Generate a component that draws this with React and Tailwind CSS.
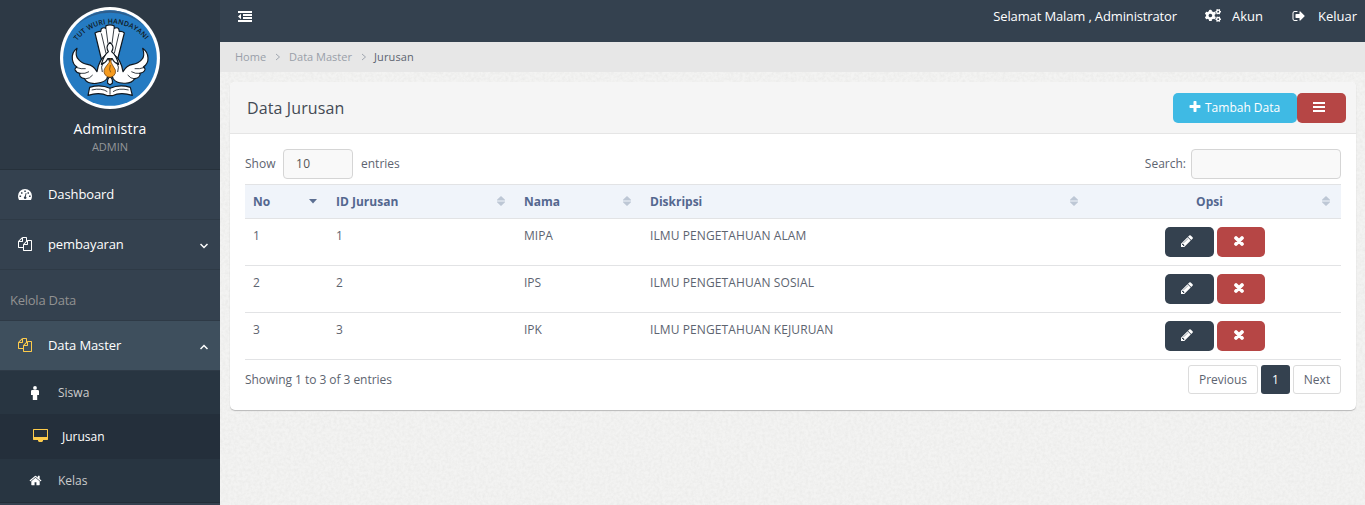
import React from "react";
import { FaCogs } from "react-icons/fa";

const paths = {
  files:
    "M1696 384q40 0 68 28t28 68v1216q0 40-28 68t-68 28h-960q-40 0-68-28t-28-68v-288h-544q-40 0-68-28t-28-68v-672q0-40 20-88t48-76l408-408q28-28 76-48t88-20h416q40 0 68 28t28 68v328q68-40 128-40h416zm-544 213l-299 299h299v-299zm-640-384l-299 299h299v-299zm196 647l316-316v-416h-384v416q0 40-28 68t-68 28h-416v640h512v-256q0-40 20-88t48-76zm956 804v-1152h-384v416q0 40-28 68t-68 28h-416v640h896z",
  plus:
    "M1600 736v192q0 40-28 68t-68 28h-416v416q0 40-28 68t-68 28h-192q-40 0-68-28t-28-68v-416h-416q-40 0-68-28t-28-68v-192q0-40 28-68t68-28h416v-416q0-40 28-68t68-28h192q40 0 68 28t28 68v416h416q40 0 68 28t28 68z",
  pencil:
    "M491 1536l91-91-235-235-91 91v107h128v128h107zm523-928q0-22-22-22-10 0-17 7l-542 542q-7 7-7 17 0 22 22 22 10 0 17-7l542-542q7-7 7-17zm-54-192l416 416-832 832h-416v-416zm683 96q0 53-37 90l-166 166-416-416 166-165q36-38 90-38 53 0 91 38l235 234q37 39 37 91z",
  home:
    "M1472 992v480q0 26-19 45t-45 19h-384v-384h-256v384h-384q-26 0-45-19t-19-45v-480q0-1 .5-3t.5-3l575-474 575 474q1 2 1 6zm223-69l-62 74q-8 9-21 11h-3q-13 0-21-7l-692-577-692 577q-12 8-24 7-13-2-21-11l-62-74q-8-10-7-23.5t11-21.5l719-599q32-26 76-26t76 26l244 204v-195q0-14 9-23t23-9h192q14 0 23 9t9 23v408l219 182q10 8 11 21.5t-7 23.5z",
  signOut:
    "M704 1440q0 4 1 20t.5 26.5-3 23.5-10 19.5-20.5 6.5h-320q-119 0-203.5-84.5t-84.5-203.5v-704q0-119 84.5-203.5t203.5-84.5h320q13 0 22.5 9.5t9.5 22.5q0 4 1 20t.5 26.5-3 23.5-10 19.5-20.5 6.5h-320q-66 0-113 47t-47 113v704q0 66 47 113t113 47h312l11.5 1 11.5 3 8 5.5 7 9 2 13.5zm928-544q0 26-19 45l-544 544q-19 19-45 19t-45-19-19-45v-288h-448q-26 0-45-19t-19-45v-384q0-26 19-45t45-19h448v-288q0-26 19-45t45-19 45 19l544 544q19 19 19 45z",
};

function Glyph({ name, className }) {
  return (
    <svg viewBox="0 0 1792 1792" fill="currentColor" className={className}>
      <path d={paths[name]} />
    </svg>
  );
}

function Cross() {
  return (
    <svg viewBox="0 0 10 10" className="h-[10px] w-[10px]" fill="none" stroke="currentColor" strokeWidth="3.700" strokeLinecap="round">
      <path d="M2 2l6 6M8 2L2 8" />
    </svg>
  );
}

function Emblem() {
  return (
    <svg viewBox="60 20 300 306" className="h-[102px] w-[100px]">
      <ellipse cx="210" cy="173" rx="150" ry="153" fill="#fff" />
      <ellipse cx="210" cy="173" rx="140.500" ry="143.500" fill="#257bc2" />
      <path d="M106 77Q154 30 210 30t104 47Q268 37 210 37T106 77z" fill="#2d5f8f" />
      <path id="motto-arc" d="M111 122A129.500 129.500 0 0 1 320 124" fill="none" />
      <text fontFamily="Open Sans, sans-serif" fontSize="21" fontWeight="600" fill="#101820">
        <textPath href="#motto-arc" textLength="236" lengthAdjust="spacing">TUT WURI HANDAYANI</textPath>
      </text>
      <g fill="#fff" stroke="#10171e" strokeWidth="3.500" strokeLinejoin="round">
        <path d="M184 176L165 98q11-7 17-4l2-9q8-5 13-1l1-8q12-5 24 0l1 8q8-4 13 1l2 9q8-3 15 4l-20 78z" />
        <path d="M111 144q-16 12-14 32 2 17 14 24-7 4-6 8 4 9 15 11-3 6 1 10 5 5 13 6 4 10 18 13 12 3 22 0 18-2 26-12l10-25 10 25q10 12 26 12 28 4 38-13 12-1 15-9 3-4 0-7 13-2 16-11 1-4-5-8 15-10 14-27 0-17-16-29 8 24-3 34-10 12-27 14-19 3-29 22-6-37-29-52l-10 24-10-24q-23 15-29 52-10-19-29-22-16-2-26-14-12-12-5-34z" />
        <path d="M210 126q9 8 9 15t-4 13q13 9 21 38-14-5-19-17h-14q-5 12-19 17 8-29 21-38-4-6-4-13t9-15z" />
        <path d="M144 285l5-24q33-10 61 3 28-13 61-3l6 24q-35-11-60 1h-14q-25-12-59-1z" />
        <path d="M203 249q-2-15 7-20 9 5 7 20l-7 4z" />
      </g>
      <path d="M184 99l14 60M198 84l6 46M222 84l-6 46M237 99l-14 60M107 201q18 6 30 4M120 219q16 2 27-5M135 236q15-1 23-12M315 201q-18 6-31 4M301 219q-15 2-27-5M286 236q-15-1-23-12M210 264v19M155 269q30-7 47 5M266 269q-30-7-47 5M190 185q-9 16-3 30M230 185q9 16 3 30" fill="none" stroke="#10171e" strokeWidth="2.500" />
      <path d="M211 174q-2 14-12 23-12 14-4 26 6 8 15 8 12-1 16-12 3-10-5-19-9-12-10-26z" fill="#f59b1f" stroke="#59310b" strokeWidth="2" />
      <path d="M211 194q-5 15 1 22" fill="none" stroke="#59310b" strokeWidth="2" />
    </svg>
  );
}

function Gauge() {
  return (
    <svg viewBox="0 0 14 11" className="h-[11px] w-[14px]">
      <path d="M0 7a7 7 0 0 1 14 0q0 2-1 4H1Q0 9 0 7z" fill="currentColor" />
      <path d="M1.500 6.500h1.600v1.600H1.500zM3 3.200h1.500v1.500H3zM6.300 1.500h1.500V3H6.300zM9.500 3.200H11v1.500H9.500zM11 6.500h1.600v1.600H11zM7.700 4l.9.300-.8 3.200q1 .8.600 1.700-.5.900-1.500.8-1-.2-1.100-1.200 0-1 1-1.500z" fill="#34414f" />
    </svg>
  );
}

function Man() {
  return (
    <svg viewBox="0 0 8 14" className="h-[14px] w-[8px]" fill="currentColor">
      <circle cx="4" cy="1.900" r="1.900" />
      <path d="M1.300 4h5.400Q8 4 8 5.300V9H6.200v5H1.800V9H0V5.300Q0 4 1.300 4z" />
    </svg>
  );
}

function Monitor() {
  return (
    <svg viewBox="0 0 15 13" className="h-[13px] w-[15px]" fill="#fdcb4b">
      <path fillRule="evenodd" d="M.5 0h14l.5.5V10.500l-.5.5H10v1H9.500v1h-4v-1H5v-1H.5l-.5-.5V.5zM1 1v7h13V1z" />
    </svg>
  );
}

function Outdent() {
  return (
    <svg viewBox="0 0 14 11" className="h-[11px] w-[14px]" fill="currentColor">
      <path d="M0 0h14v2H0zM5 3h9v2H5zM5 6h9v2H5zM0 9h14v2H0zM0 5.500L3 2.700v5.600z" />
    </svg>
  );
}

function Chevron({ d, className, thin }) {
  return (
    <svg viewBox="0 0 8 6" className={className} fill="none" stroke="currentColor" strokeWidth={thin ? 0.9 : 1.5}>
      <path d={d} />
    </svg>
  );
}

function Sort({ active }) {
  return (
    <svg viewBox="0 0 8 10" className="mb-[2px] h-[10px] w-[8px] shrink-0">
      {active ? (
        <path d="M0 3h8L4 7.500z" fill="#5c6f92" />
      ) : (
        <path d="M4 0l4 3.800V4.500H0V3.800zM0 5.500h8v.7L4 10 0 6.200z" fill="#bdc7d5" />
      )}
    </svg>
  );
}

function PaperTexture() {
  return (
    <svg className="absolute inset-0 h-full w-full" aria-hidden="true">
      <filter id="grain" x="0" y="0" width="100%" height="100%">
        <feTurbulence type="fractalNoise" baseFrequency="0.35" numOctaves="3" seed="4" />
        <feColorMatrix values="0 0 0 0 0.45  0 0 0 0 0.45  0 0 0 0 0.43  0.22 0 0 0 -0.07" />
      </filter>
      <rect width="100%" height="100%" filter="url(#grain)" />
    </svg>
  );
}

function MenuItem({ icon, label, chevron, active }) {
  return (
    <div
      className={
        active
          ? "flex h-[50px] items-center border-b border-[#2e3a46] bg-[#3e4f5d] pr-[12px] pb-px pl-[18px] text-white"
          : "flex h-[50px] items-center border-b border-[#2e3a46] pr-[12px] pb-px pl-[18px] text-white"
      }
    >
      <span className="flex w-[30px]">{icon}</span>
      <span className="flex-1 text-[13px] leading-5 tracking-[-0.1px]">{label}</span>
      {chevron && <Chevron d={chevron} className="mt-[3px] h-[6px] w-[8px]" />}
    </div>
  );
}

function Sidebar() {
  return (
    <aside className="flex h-[505px] w-[220px] shrink-0 flex-col overflow-hidden bg-[#34414f]">
      <div className="flex h-[170px] shrink-0 flex-col items-center border-b border-[#26313b] bg-[#2d3945] pt-[7px]">
        <Emblem />
        <div className="mt-[10px] text-[14px] leading-5 font-medium tracking-[0.2px] text-white">Administra</div>
        <div className="text-[11px] leading-4 text-[#939699]">ADMIN</div>
      </div>
      <nav className="flex flex-col">
        <MenuItem icon={<Gauge />} label="Dashboard" />
        <MenuItem icon={<Glyph name="files" className="h-[14px] w-[14px]" />} label="pembayaran" chevron="M.5 1l3.500 3.500L7.500 1" />
        <div className="flex h-[51px] items-end border-b border-[#2e3a46] px-[10px] pb-[10px] text-[13px] leading-5 tracking-[-0.25px] text-[#929292]">
          Kelola Data
        </div>
        <MenuItem
          active
          icon={<Glyph name="files" className="h-[14px] w-[14px] text-[#fdcb4b]" />}
          label="Data Master"
          chevron="M.5 5L4 1.500 7.500 5"
        />
        <div className="flex flex-col border-b border-[#222d37] bg-[#283541] text-[12px] text-[#cccccc]">
          <div className="flex h-[43px] items-center pl-[31px]">
            <span className="w-[27px] text-white"><Man /></span>
            <span>Siswa</span>
          </div>
          <div className="flex h-[45px] items-center bg-[#242f3b] pl-[33px] text-white">
            <span className="w-[29px] pb-[2px]"><Monitor /></span>
            <span>Jurusan</span>
          </div>
          <div className="flex h-[43px] items-center pl-[29px]">
            <span className="w-[29px] text-white"><Glyph name="home" className="h-[13px] w-[13px]" /></span>
            <span>Kelas</span>
          </div>
        </div>
      </nav>
    </aside>
  );
}

function TopBar() {
  return (
    <header className="flex h-[42px] shrink-0 justify-between bg-[#34414f] pt-[6px] pr-[8px] pl-[18px] text-[13px] leading-5 text-white">
      <div className="pt-[5px]"><Outdent /></div>
      <div className="flex">
        <span className="tracking-[-0.14px]">Selamat Malam , Administrator</span>
        <FaCogs className="mt-[2px] ml-[28px] h-[15px] w-[16px]" />
        <span className="ml-[11px]">Akun</span>
        <Glyph name="signOut" className="mt-[3px] ml-[29px] h-[14px] w-[14px]" />
        <span className="ml-[12px]">Keluar</span>
      </div>
    </header>
  );
}

function Breadcrumb() {
  return (
    <div className="flex h-[30px] shrink-0 items-center bg-[#e7e7e7] pl-[15px] text-[11px] text-[#999fa9]">
      <span>Home</span>
      <Chevron thin d="M2 0l3.500 3L2 6" className="mr-[7px] ml-[8px] h-[8px] w-[8px]" />
      <span>Data Master</span>
      <Chevron thin d="M2 0l3.500 3L2 6" className="mr-[6px] ml-[8px] h-[8px] w-[8px]" />
      <span className="tracking-[0.15px] text-[#5d6470]">Jurusan</span>
    </div>
  );
}

const cols = "grid grid-cols-[83px_188px_126px_447px_252px]";
const headers = ["No", "ID Jurusan", "Nama", "Diskripsi", "Opsi"];
const rows = [
  ["1", "1", "MIPA", "ILMU PENGETAHUAN ALAM"],
  ["2", "2", "IPS", "ILMU PENGETAHUAN SOSIAL"],
  ["3", "3", "IPK", "ILMU PENGETAHUAN KEJURUAN"],
];

function DataTable() {
  return (
    <div className="mt-[5px]">
      <div className={`${cols} h-[35px] border-y border-[#e2e3e5] bg-[#f0f4fa] text-[12px] font-bold text-[#54678f]`}>
        {headers.map((h, i) => (
          <div key={h} className="flex items-center justify-between pr-[11px] pl-[8px]">
            <span className={i === 4 ? "flex-1 text-center" : ""}>{h}</span>
            <Sort active={i === 0} />
          </div>
        ))}
      </div>
      {rows.map((r) => (
        <div key={r[0]} className={`${cols} h-[47px] border-b border-[#e2e3e5] text-[12px] leading-[18px]`}>
          {r.map((c, i) => (
            <div key={i} className={i === 3 ? "pt-[8px] pl-[8px] tracking-[0.1px] whitespace-nowrap" : "pt-[8px] pl-[8px] whitespace-nowrap"}>
              {c}
            </div>
          ))}
          <div className="flex items-start gap-[3px] pt-[8px] pl-[76px] text-white">
            <button className="flex h-[30px] w-[49px] items-center rounded-[5px] bg-[#34414f] pl-[15px]">
              <Glyph name="pencil" className="mb-[2px] h-[14px] w-[14px]" />
            </button>
            <button className="flex h-[30px] w-[48px] items-center rounded-[5px] bg-[#b64645] pb-[2px] pl-[17px]">
              <Cross />
            </button>
          </div>
        </div>
      ))}
    </div>
  );
}

function Panel() {
  return (
    <section className="relative mt-[10px] mr-[9px] ml-[10px] h-[328px] rounded-[5px] bg-white text-[12px] text-[#5d6470] shadow-[0_1px_1px_#b9b9b9]">
      <div className="flex h-[52px] items-center justify-between rounded-t-[5px] border-b border-[#e5e5e5] bg-[#f5f5f5] pr-[10px] pl-[17px]">
        <h3 className="text-[16px] tracking-[0.12px] text-[#434a54]">Data Jurusan</h3>
        <div className="flex text-white">
          <button className="flex h-[30px] w-[124px] items-center rounded-[5px] bg-[#3fbae4] pl-[15px] whitespace-nowrap">
            <Glyph name="plus" className="mr-[3px] mb-[1px] h-[14px] w-[14px]" />
            Tambah Data
          </button>
          <button className="flex h-[30px] w-[49px] items-center rounded-[5px] bg-[#b64645] pl-[16px]">
            <svg viewBox="0 0 12 10" className="mb-[2px] h-[10px] w-[12px]" fill="currentColor">
              <path d="M0 0h12v2H0zM0 4h12v2H0zM0 8h12v2H0z" />
            </svg>
          </button>
        </div>
      </div>
      <div className="px-[15px] pt-[15px]">
        <div className="flex h-[30px] items-center justify-between">
          <div className="flex items-center">
            <span className="w-[38px]">Show</span>
            <span className="flex h-[30px] w-[70px] items-center rounded-[4px] border border-[#d5d5d5] bg-[#f9f9f9] pl-[12px] text-[12px] tracking-[0.3px] text-[#555]">10</span>
            <span className="ml-[8px]">entries</span>
          </div>
          <div className="flex items-center">
            <span>Search:</span>
            <input className="ml-[5px] h-[30px] w-[150px] rounded-[4px] border border-[#d5d5d5] bg-[#f9f9f9]" />
          </div>
        </div>
        <DataTable />
        <div className="mt-[5px] flex justify-between">
          <span className="pt-[6px] leading-[18px] tracking-[-0.05px]">Showing 1 to 3 of 3 entries</span>
          <div className="flex gap-[3px]">
            <button className="h-[29px] w-[70px] rounded-[3px] border border-[#dcdcdc]">Previous</button>
            <button className="h-[29px] w-[29px] rounded-[3px] bg-[#34414f] text-white">1</button>
            <button className="h-[29px] w-[48px] rounded-[3px] border border-[#dcdcdc]">Next</button>
          </div>
        </div>
      </div>
    </section>
  );
}

export default function App() {
  return (
    <div className="flex h-[505px] w-[1365px] overflow-hidden font-['Open_Sans',sans-serif]">
      <Sidebar />
      <div className="flex min-w-0 flex-1 flex-col">
        <TopBar />
        <Breadcrumb />
        <main className="relative flex-1 overflow-hidden bg-[#f3f3f2]">
          <PaperTexture />
          <Panel />
        </main>
      </div>
    </div>
  );
}
